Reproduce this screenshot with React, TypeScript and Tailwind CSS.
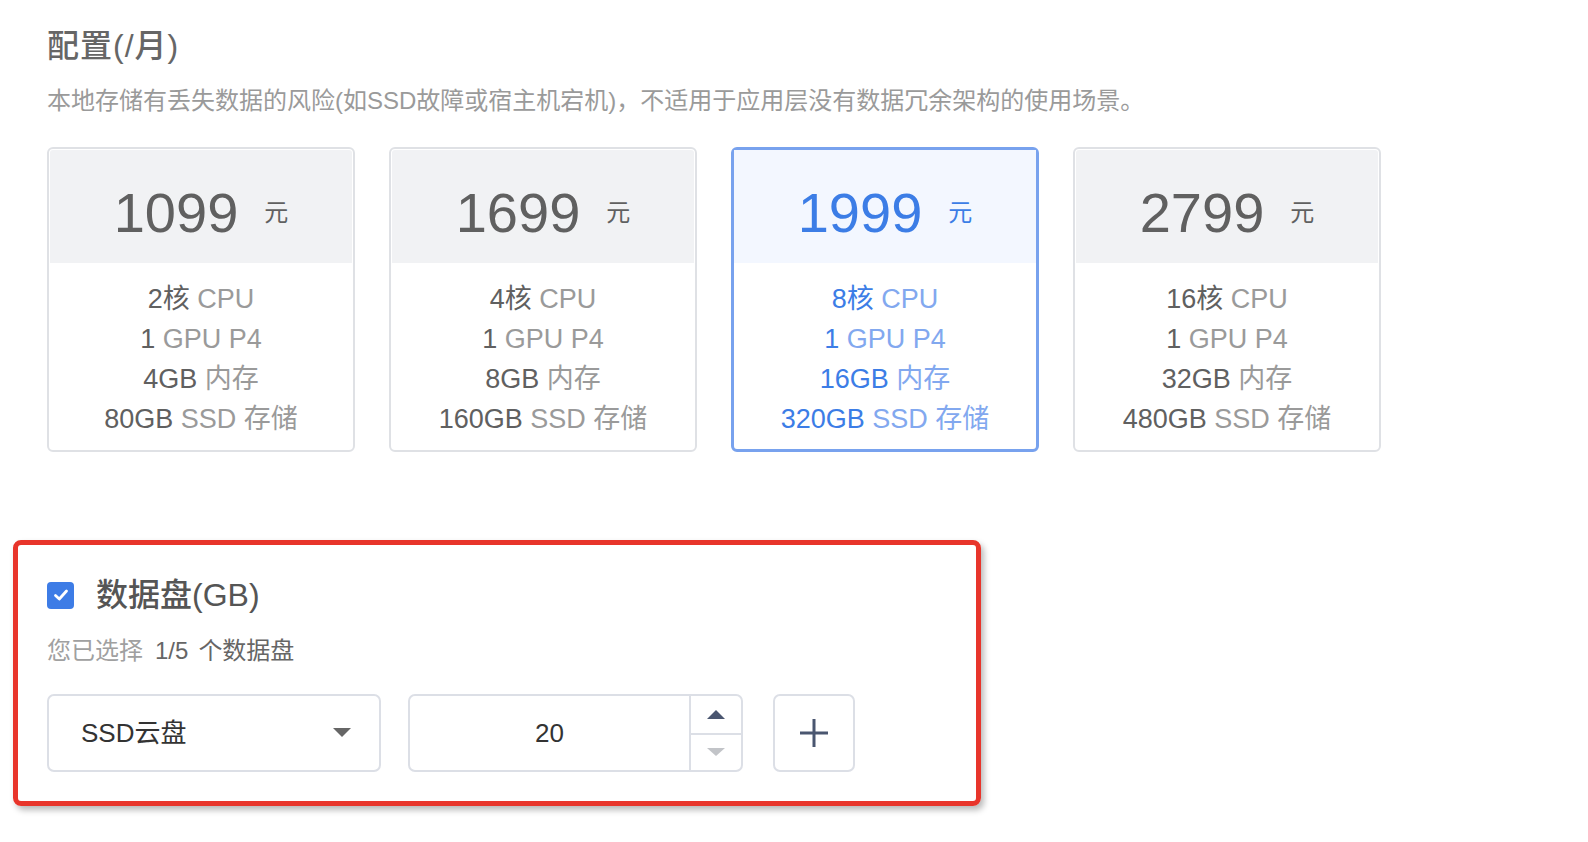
import React from "react";

const FONT = '"Liberation Sans", "Noto Sans CJK SC", sans-serif';

type Plan = { price: string; core: string; gpu: string; mem: string; disk: string };

const plans: Plan[] = [
  { price: "1099", core: "2", gpu: "1", mem: "4GB", disk: "80GB" },
  { price: "1699", core: "4", gpu: "1", mem: "8GB", disk: "160GB" },
  { price: "1999", core: "8", gpu: "1", mem: "16GB", disk: "320GB" },
  { price: "2799", core: "16", gpu: "1", mem: "32GB", disk: "480GB" },
];

function Card({ plan, selected }: { plan: Plan; selected: boolean }) {
  const dark = selected ? "text-[#3c7de6]" : "text-[#606060]";
  const light = selected ? "text-[#82a8ef]" : "text-[#9a9a9a]";
  return (
    <div
      className={
        selected
          ? "w-[308px] h-[305px] rounded-[6px] border-[3px] border-[#78a2ee] bg-white flex flex-col"
          : "w-[308px] h-[305px] rounded-[6px] border-2 border-[#dfe1e5] p-px bg-white flex flex-col"
      }
    >
      <div
        className={
          selected
            ? "h-[113px] bg-[#f3f7ff] flex items-center justify-center pt-3"
            : "h-[113px] bg-[#f1f2f4] rounded-t-[3px] flex items-center justify-center pt-3"
        }
      >
        <span className={`text-[56px] leading-none ${dark}`}>{plan.price}</span>
        <span className={`text-[24px] leading-none ml-[26px] ${dark}`}>元</span>
      </div>
      <div className="flex flex-col items-center pt-[16px] text-[27px] leading-[40px]">
        <div>
          <span className={dark}>{plan.core}核</span> <span className={light}>CPU</span>
        </div>
        <div>
          <span className={dark}>{plan.gpu}</span> <span className={light}>GPU P4</span>
        </div>
        <div>
          <span className={dark}>{plan.mem}</span> <span className={light}>内存</span>
        </div>
        <div>
          <span className={dark}>{plan.disk}</span> <span className={light}>SSD 存储</span>
        </div>
      </div>
    </div>
  );
}

export default function App() {
  return (
    <div className="w-[1588px] h-[842px] bg-white overflow-hidden" style={{ fontFamily: FONT }}>
      <div className="pl-[47px] pt-[30px]">
        <div className="text-[32px] leading-[32px] text-[#666666] font-medium tracking-[1px]">配置(/月)</div>
        <div className="mt-[27px] text-[24px] leading-[24px] text-[#9a9a9a] whitespace-nowrap">
          本地存储有丢失数据的风险(如SSD故障或宿主机宕机)，不适用于应用层没有数据冗余架构的使用场景。
        </div>
        <div className="mt-[34px] flex gap-[34px]">
          {plans.map((p, i) => (
            <Card key={p.price} plan={p} selected={i === 2} />
          ))}
        </div>
      </div>

      <div className="ml-[13px] mt-[88px] w-[968px] rounded-[8px] border-[5px] border-[#e8352b] shadow-[3px_4px_6px_rgba(0,0,0,0.28)] pl-[29px] pt-[34px] pb-[29px]">
        <div className="flex items-center h-[32px]">
          <div className="w-[27px] h-[27px] rounded-[4px] bg-[#3d7ce6] flex items-center justify-center">
            <svg width="18" height="18" viewBox="0 0 18 18">
              <path d="M3.5 9.5 L7.3 13 L14.5 5" fill="none" stroke="#ffffff" strokeWidth="2.8" strokeLinecap="round" strokeLinejoin="round" />
            </svg>
          </div>
          <span className="ml-[22px] text-[32px] leading-[32px] text-[#555555] font-medium">数据盘(GB)</span>
        </div>
        <div className="mt-[28px] text-[24px] leading-[24px] flex">
          <span className="text-[#a0a0a0]">您已选择</span>
          <span className="ml-[12px] text-[#666666]">1/5</span>
          <span className="ml-[10px] text-[#666666]">个数据盘</span>
        </div>
        <div className="mt-[31px] flex items-center">
          <div className="w-[334px] h-[78px] rounded-[7px] border-2 border-[#dcdfe6] flex items-center justify-between pl-[32px] pr-[28px]">
            <span className="text-[26px] text-[#333333]">SSD云盘</span>
            <svg width="18" height="10" viewBox="0 0 18 10">
              <path d="M0 0 L18 0 L9 9 Z" fill="#666666" />
            </svg>
          </div>
          <div className="ml-[27px] w-[335px] h-[78px] rounded-[7px] border-2 border-[#dcdfe6] flex">
            <div className="flex-1 flex items-center justify-center text-[26px] text-[#333333]">20</div>
            <div className="w-[52px] border-l-2 border-[#dcdfe6] flex flex-col">
              <div className="flex-1 flex items-center justify-center pt-px">
                <svg width="18" height="9" viewBox="0 0 18 9">
                  <path d="M9 0 L18 9 L0 9 Z" fill="#4a5670" />
                </svg>
              </div>
              <div className="flex-1 border-t-2 border-[#dcdfe6] flex items-center justify-center">
                <svg width="18" height="8" viewBox="0 0 18 8">
                  <path d="M0 0 L18 0 L9 8 Z" fill="#c2c4c8" />
                </svg>
              </div>
            </div>
          </div>
          <div className="ml-[30px] w-[82px] h-[78px] rounded-[7px] border-2 border-[#dcdfe6] flex items-center justify-center">
            <svg width="30" height="30" viewBox="0 0 30 30">
              <path d="M15 1 V29 M1 15 H29" stroke="#4a5670" strokeWidth="3" />
            </svg>
          </div>
        </div>
      </div>
    </div>
  );
}
